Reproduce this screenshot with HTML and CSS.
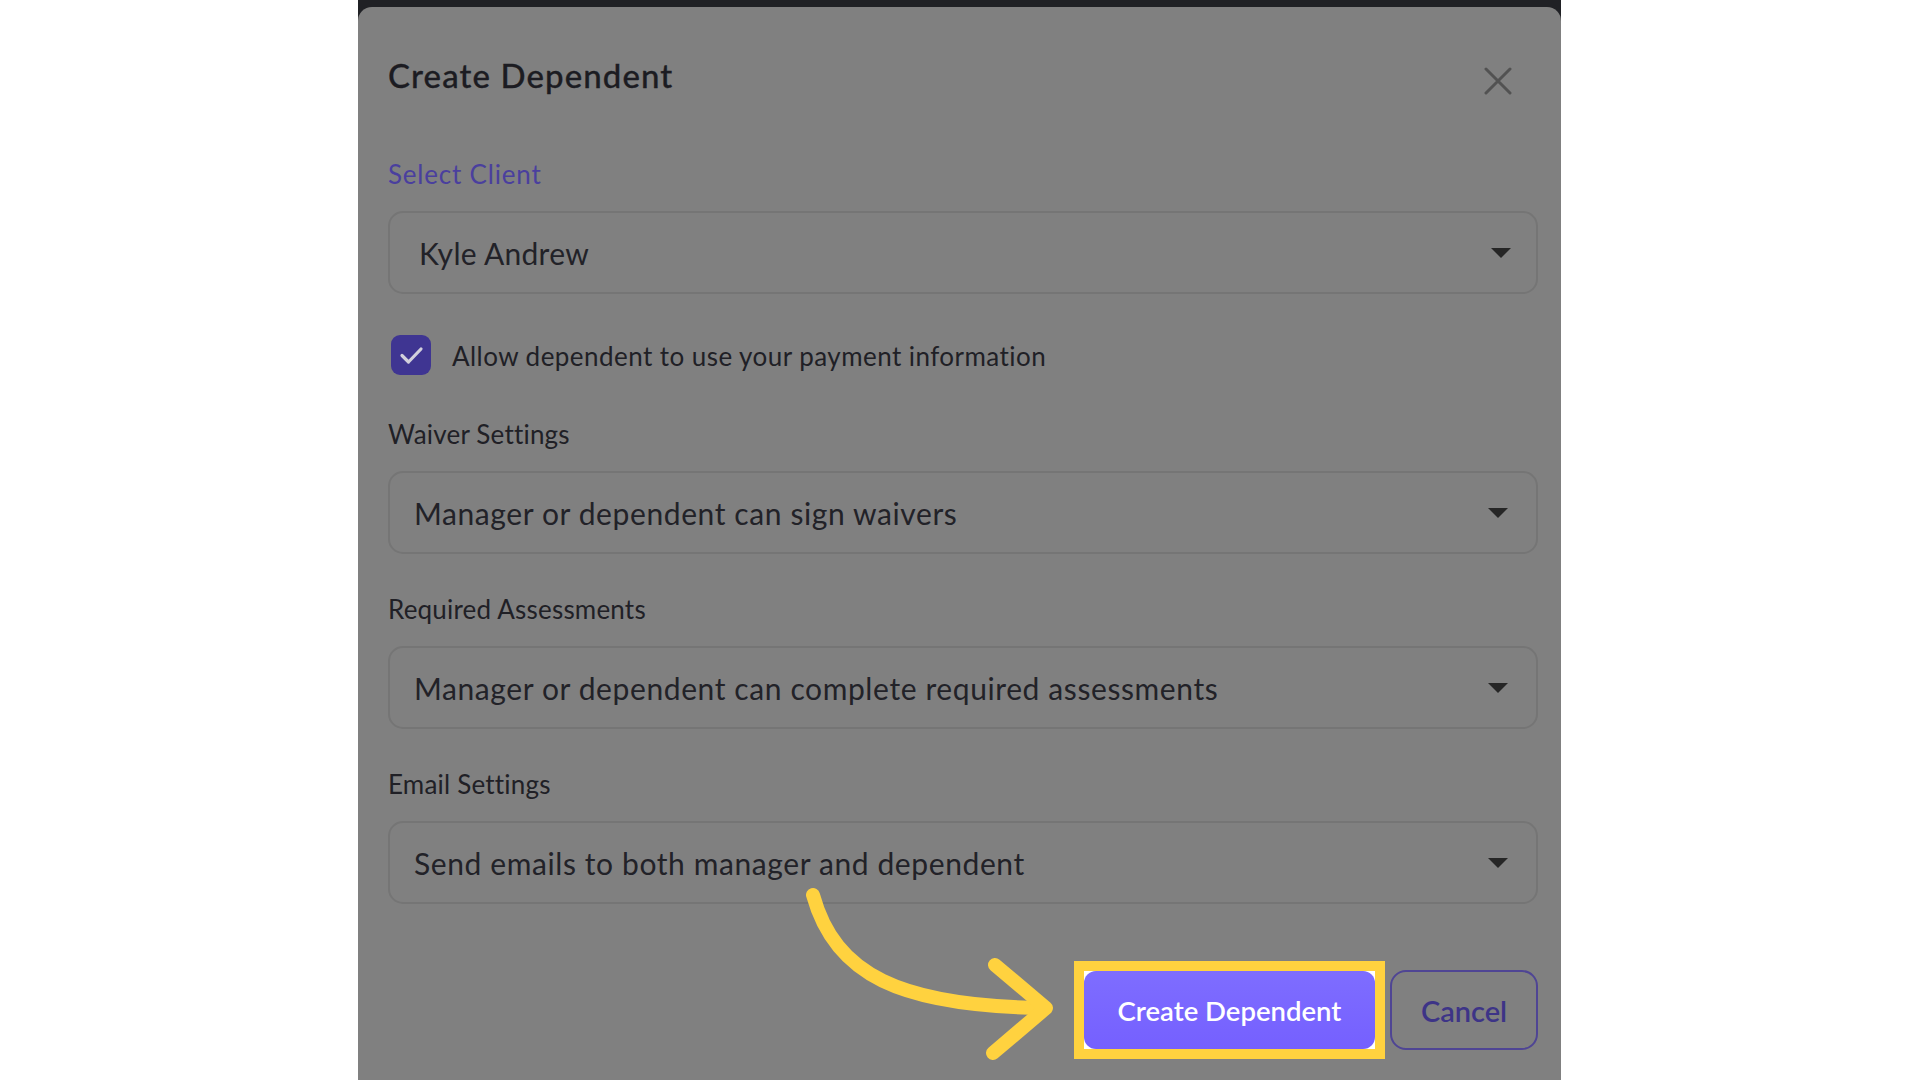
FILE: index.html
```html
<!DOCTYPE html>
<html lang="en">
<head>
<meta charset="utf-8">
<title>Create Dependent</title>
<link rel="stylesheet" href="styles.css">
</head>
<body>
<div class="page">
  <div class="stage">
    <div class="modal">
      <div class="modal-header">
        <h2 class="modal-title">Create Dependent</h2>
        <button class="close-btn" aria-label="Close">
          <svg viewBox="0 0 28 28" width="28" height="28"><path d="M2 2 L26 26 M26 2 L2 26" stroke="#525252" stroke-width="3" stroke-linecap="round" fill="none"/></svg>
        </button>
      </div>

      <div class="field field-client">
        <div class="label label-accent">Select Client</div>
        <div class="select select-client">
          <span class="select-value">Kyle Andrew</span>
          <span class="caret"></span>
        </div>
      </div>

      <div class="check-row">
        <span class="checkbox">
          <svg viewBox="0 0 40 40" width="40" height="40"><path d="M11 20.5 L17.5 27 L30 14" stroke="#d2d0dc" stroke-width="3.2" stroke-linecap="round" stroke-linejoin="round" fill="none"/></svg>
        </span>
        <span class="check-label">Allow dependent to use your payment information</span>
      </div>

      <div class="field field-first">
        <div class="label">Waiver Settings</div>
        <div class="select">
          <span class="select-value">Manager or dependent can sign waivers</span>
          <span class="caret"></span>
        </div>
      </div>

      <div class="field">
        <div class="label">Required Assessments</div>
        <div class="select">
          <span class="select-value">Manager or dependent can complete required assessments</span>
          <span class="caret"></span>
        </div>
      </div>

      <div class="field">
        <div class="label">Email Settings</div>
        <div class="select">
          <span class="select-value">Send emails to both manager and dependent</span>
          <span class="caret"></span>
        </div>
      </div>

      <div class="actions">
        <span class="highlight">
          <button class="btn btn-primary">Create Dependent</button>
        </span>
        <button class="btn btn-outline">Cancel</button>
      </div>
    </div>
  </div>

  <svg class="callout" viewBox="0 0 1920 1080" width="1920" height="1080" aria-hidden="true">
    <path d="M813 895 C 835 975 900 1006 1043 1008" stroke="#ffd23f" stroke-width="14" stroke-linecap="round" fill="none"/>
    <path d="M995 965 L1046 1008 L993 1053" stroke="#ffd23f" stroke-width="14" stroke-linecap="round" stroke-linejoin="round" fill="none"/>
  </svg>
</div>
</body>
</html>
```

FILE: styles.css
```css
* { box-sizing: border-box; }

html, body {
  margin: 0;
  padding: 0;
  width: 1920px;
  height: 1080px;
  overflow: hidden;
  background: #ffffff;
  font-family: "Lato", "Noto Sans", "Liberation Sans", sans-serif;
  color: #1f1f25;
}

.page {
  position: relative;
  width: 1920px;
  height: 1080px;
  display: flex;
}

.stage {
  margin-left: 358px;
  width: 1203px;
  height: 1080px;
  background: #202125;
  padding-top: 7px;
}

.modal {
  height: 1073px;
  background: #808080;
  border-radius: 14px 14px 0 0;
  padding: 48px 23px 0 30px;
  display: flex;
  flex-direction: column;
}

.modal-header {
  display: flex;
  justify-content: space-between;
  align-items: center;
  height: 40px;
}

.modal-title {
  margin: 0;
  font-size: 33px;
  font-weight: 500;
  line-height: 38px;
  color: #1c1c22;
  letter-spacing: 1.1px;
  -webkit-text-stroke: 0.3px #1c1c22;
}

.close-btn {
  border: 0;
  padding: 0;
  background: transparent;
  width: 28px;
  height: 28px;
  margin-right: 26px;
  margin-top: 12px;
  display: flex;
}

.field {
  display: flex;
  flex-direction: column;
  margin-top: 40px;
}

.field-client { margin-top: 64px; }
.field-first { margin-top: 44px; }

.label {
  font-size: 26px;
  line-height: 30px;
  color: #202026;
  margin-bottom: 22px;
  letter-spacing: 0.2px;
}

.label-accent {
  color: #4a3f9e;
  letter-spacing: 0.8px;
}

.select {
  height: 83px;
  border: 2px solid #757575;
  border-radius: 15px;
  display: flex;
  align-items: center;
  justify-content: space-between;
  padding: 0 28px 0 24px;
}

.select-client {
  padding: 0 25px 0 29px;
}

.select-value {
  font-size: 30px;
  color: #222228;
  letter-spacing: 0.6px;
}

.select-client .select-value {
  letter-spacing: 0.3px;
}

.caret {
  width: 0;
  height: 0;
  border-left: 10px solid transparent;
  border-right: 10px solid transparent;
  border-top: 10px solid #262626;
}

.check-row {
  display: flex;
  align-items: center;
  gap: 21px;
  margin-top: 41px;
  height: 40px;
  padding-left: 3px;
}

.checkbox {
  width: 40px;
  height: 40px;
  border-radius: 9px;
  background: #3f3592;
  display: flex;
}

.check-label {
  font-size: 26px;
  color: #202026;
  letter-spacing: 0.45px;
  margin-top: 2px;
}

.actions {
  display: flex;
  justify-content: flex-end;
  align-items: center;
  gap: 15px;
  margin-top: 66px;
}

.highlight {
  display: flex;
  width: 291px;
  height: 78px;
  background: #ffffff;
  outline: 10px solid #ffd23f;
}

.btn {
  font-family: "Lato", "Noto Sans", "Liberation Sans", sans-serif;
  cursor: pointer;
}

.btn-primary {
  width: 100%;
  height: 100%;
  border: 0;
  border-radius: 12px;
  background: linear-gradient(#7e6dff, #7560ff);
  color: #ffffff;
  font-size: 27.5px;
  font-weight: 600;
}

.btn-outline {
  width: 148px;
  height: 80px;
  border: 2px solid #4f4594;
  border-radius: 16px;
  background: transparent;
  color: #3d3487;
  font-size: 29px;
  font-weight: 600;
}

.callout {
  position: absolute;
  left: 0;
  top: 0;
  pointer-events: none;
}
```
